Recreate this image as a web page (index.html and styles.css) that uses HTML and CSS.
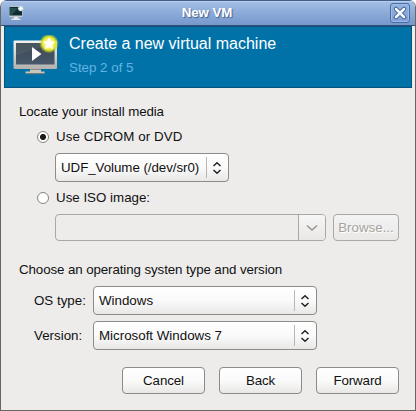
FILE: index.html
```html
<!DOCTYPE html>
<html lang="en">
<head>
<meta charset="utf-8">
<title>New VM</title>
<link rel="stylesheet" href="styles.css">
</head>
<body>
<div class="window">
  <header class="titlebar">
    <svg class="app-icon" width="18" height="16" viewBox="0 0 18 16">
      <rect x="1" y="1.500" width="13.500" height="10.500" rx="1" fill="#c5cdd0"/>
      <rect x="1.500" y="2" width="12.500" height="8.500" fill="#102c30"/>
      <path d="M2 3h8L4 10H2z" fill="#244d50"/>
      <path d="M6 12h4v1.500h2.500V15h-9v-1.500H6z" fill="#e4e6e8"/>
      <circle cx="12.800" cy="3.500" r="2.800" fill="#b7d0d2"/>
      <path d="M12.800 1.500v4M10.800 3.500h4" stroke="#fff" stroke-width="1.300"/>
    </svg>
    <h1 class="title">New VM</h1>
    <button class="close" aria-label="Close">
      <svg width="18" height="18" viewBox="0 0 18 18">
        <path d="M5 5l8 8M13 5l-8 8" stroke="#3c5c91" stroke-width="4.400" stroke-linecap="round"/>
        <path d="M5 5l8 8M13 5l-8 8" stroke="#f4f8ff" stroke-width="2.500" stroke-linecap="round"/>
      </svg>
    </button>
  </header>
  <section class="banner">
    <svg class="banner-icon" width="48" height="44" viewBox="0 0 48 44">
      <defs>
        <linearGradient id="bezel" x2="0" y2="1"><stop stop-color="#f4f4f2"/><stop offset="1" stop-color="#b2b1ac"/></linearGradient>
        <linearGradient id="screen" x2="0" y2="1"><stop stop-color="#3a454f"/><stop offset="1" stop-color="#48596b"/></linearGradient>
        <radialGradient id="glow"><stop offset=".4" stop-color="#fff770"/><stop offset=".68" stop-color="#dfe52c"/><stop offset="1" stop-color="#b5c71b" stop-opacity="0"/></radialGradient>
      </defs>
      <rect x=".5" y="5.500" width="43.500" height="28.500" rx="1" fill="url(#bezel)"/>
      <rect x="3" y="8" width="38.500" height="21.500" fill="url(#screen)"/>
      <path d="M3 8h38L3 20.500z" fill="#5c6872" opacity=".45"/>
      <path d="M17 34h11v2.500h3.500v2h-19v-2H17z" fill="#c9c6be"/>
      <path d="M17 34.500h11" stroke="#8e8c85"/>
      <path d="M13 38.700h18" stroke="#75746f"/>
      <path d="M19 12l9.500 7-9.500 7z" fill="#fff"/>
      <circle cx="36" cy="8.500" r="10" fill="url(#glow)"/>
      <path d="M36 2.800l1.700 3.500 3.800.600-2.700 2.800.700 4-3.500-1.900-3.500 1.900.700-4-2.700-2.800 3.800-.600z" fill="#fff" stroke="#fffde0" stroke-linejoin="round"/>
    </svg>
    <div class="banner-text">
      <h2 class="headline">Create a new virtual machine</h2>
      <p class="step">Step 2 of 5</p>
    </div>
  </section>
  <main class="content">
    <p class="section-label">Locate your install media</p>
    <div class="option"><span class="radio checked"></span><span class="use">Use CDROM or DVD</span></div>
    <div class="combo volume"><span class="value">UDF_Volume (/dev/sr0)</span><span class="arrows"><svg width="10" height="14" viewBox="0 0 10 14"><path d="M1.500 5L5 1.800 8.500 5M1.500 9L5 12.200 8.500 9"/></svg></span></div>
    <div class="option iso"><span class="radio"></span><span class="use-iso">Use ISO image:</span></div>
    <div class="iso-row">
      <div class="entry"><span class="field"></span><span class="drop"><svg width="12" height="8" viewBox="0 0 12 8"><path d="M1 1.500l5 4.500 5-4.500"/></svg></span></div>
      <button class="button browse" disabled>Browse...</button>
    </div>
    <p class="section-label os-label">Choose an operating systen type and version</p>
    <div class="os-grid">
      <span class="os-type">OS type:</span>
      <div class="combo"><span class="value windows">Windows</span><span class="arrows"><svg width="10" height="14" viewBox="0 0 10 14"><path d="M1.500 5L5 1.800 8.500 5M1.500 9L5 12.200 8.500 9"/></svg></span></div>
      <span class="version">Version:</span>
      <div class="combo"><span class="value">Microsoft Windows 7</span><span class="arrows"><svg width="10" height="14" viewBox="0 0 10 14"><path d="M1.500 5L5 1.800 8.500 5M1.500 9L5 12.200 8.500 9"/></svg></span></div>
    </div>
    <footer class="actions">
      <button class="button">Cancel</button>
      <button class="button">Back</button>
      <button class="button">Forward</button>
    </footer>
  </main>
</div>
</body>
</html>
```

FILE: styles.css
```css
* { box-sizing: border-box; }
body {
  margin: 0;
  width: 416px;
  height: 411px;
  overflow: hidden;
  background: #fff;
  font: 13.33px/16px "Liberation Sans", Arial, sans-serif;
  color: #111;
}
h1, h2, p { margin: 0; font-weight: normal; }
svg { display: block; fill: none; }
.window {
  height: 411px;
  border: 1px solid #686662;
  border-top: 0;
  border-radius: 7px 7px 0 0;
  background: #edeceb;
  overflow: hidden;
}
.titlebar {
  height: 26px;
  display: flex;
  align-items: center;
  padding: 0 5px 0 7px;
  border-top: 1px solid #405d8b;
  border-bottom: 1px solid #33527d;
  background: linear-gradient(#a6bfe5, #93b0dc 35%, #7598cb);
  box-shadow: inset 0 1px #b9cdec;
}
.title {
  flex: 1;
  padding-right: 2px;
  text-align: center;
  font-size: 13.33px;
  font-weight: bold;
  letter-spacing: -0.1px;
  color: #fff;
  text-shadow: 1px 1px 1px #3d5e91;
}
.close {
  width: 20px;
  height: 20px;
  padding: 0;
  border: 1px solid #476ba5;
  border-radius: 3px;
  background: linear-gradient(#94b3e0, #7d9fd3);
  box-shadow: inset 0 0 0 1px #a0bbe4;
}
.banner {
  height: 62px;
  margin: 0 3px;
  display: flex;
  gap: 8px;
  padding: 8px 8px 0;
  border: 1px solid #06517e;
  border-top-color: #124f79;
  background: #0072a8;
}
.headline { font-size: 16px; line-height: 18px; color: #fff; }
.step { margin-top: 7px; color: #62b4e4; }
.content { padding: 16px 16px 0 18px; }
.section-label { letter-spacing: -0.1px; }
.option { display: flex; align-items: center; gap: 7px; height: 16px; margin: 9px 0 0 18px; }
.use { letter-spacing: 0.08px; }
.radio {
  width: 12px;
  height: 12px;
  border: 1px solid #858481;
  border-radius: 50%;
  background: #fff;
}
.checked { background: radial-gradient(circle, #1b1b1b 2.6px, #fff 3.5px); }
.combo {
  height: 29px;
  display: flex;
  align-items: center;
  justify-content: space-between;
  padding-left: 5px;
  border: 1px solid #8d8a87;
  border-radius: 4px;
  background: linear-gradient(#fff, #fafafa 50%, #e9e8e7);
  white-space: nowrap;
}
.arrows {
  width: 22px;
  height: 21px;
  display: flex;
  align-items: center;
  justify-content: center;
  padding-right: 1px;
  border-left: 1px solid #b9b7b5;
}
.arrows svg { stroke: #222; stroke-width: 1.5; }
.volume { width: 174px; margin: 8px 0 0 36px; letter-spacing: -0.05px; }
.iso { margin-top: 8px; }
.iso-row { display: flex; gap: 7px; margin: 8px 0 0 36px; }
.entry {
  width: 271px;
  height: 27px;
  display: flex;
  border: 1px solid #aaa8a5;
  border-radius: 4px;
}
.field { flex: 1; border-right: 1px solid #aaa8a5; }
.drop { width: 26px; display: flex; align-items: center; justify-content: center; background: linear-gradient(#f7f6f6, #e9e8e7); border-radius: 0 3px 3px 0; }
.drop svg { stroke: #999693; stroke-width: 1.6; }
.button {
  width: 83px;
  height: 27px;
  padding: 0;
  border: 1px solid #8d8a87;
  border-radius: 4px;
  background: linear-gradient(#fff, #fafafa 50%, #e9e8e7);
  font: inherit;
  color: #111;
}
.browse { width: 66px; border-color: #aaa8a5; background: linear-gradient(#f4f3f3, #e9e8e7); color: #a5a29f; text-shadow: 1px 1px #fff; }
.os-label { margin-top: 21px; }
.os-grid {
  width: 298px;
  display: grid;
  grid-template-columns: 58px 224px;
  column-gap: 1px;
  row-gap: 6px;
  align-items: center;
  margin: 8px 0 0 15px;
}
.actions { display: flex; justify-content: flex-end; gap: 14px; margin-top: 17px; }
.actions .button { letter-spacing: -0.1px; }
```
